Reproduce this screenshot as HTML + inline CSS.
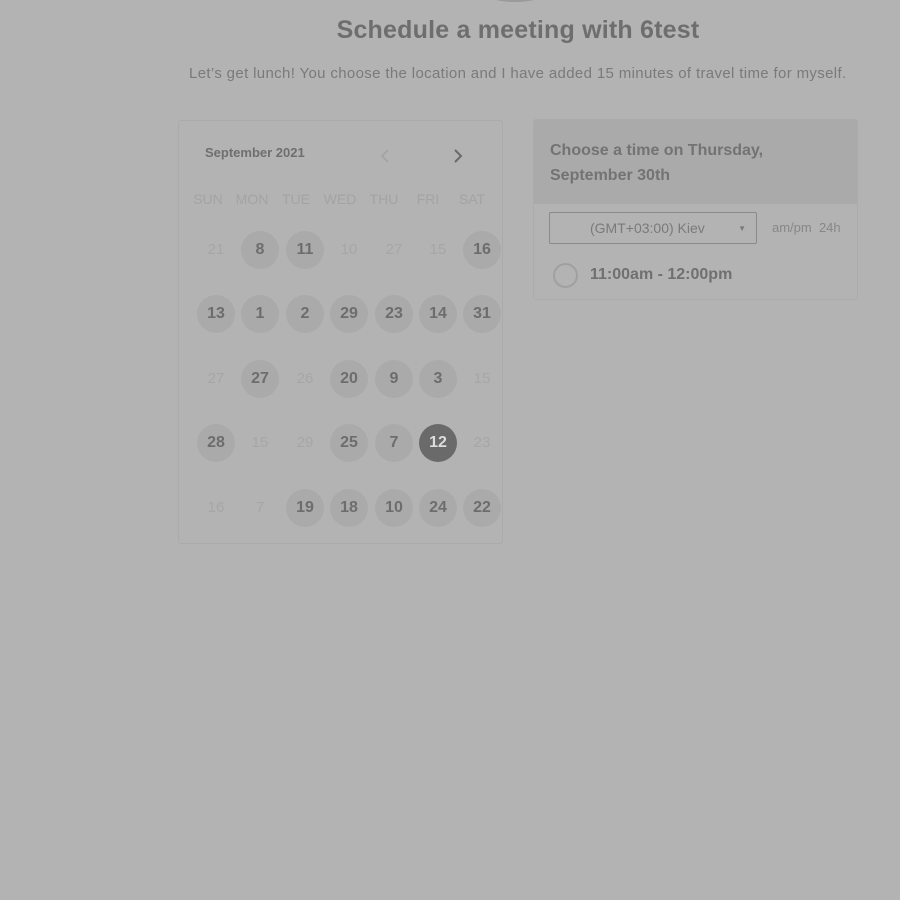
<!DOCTYPE html>
<html><head><meta charset="utf-8"><style>
*{margin:0;padding:0;box-sizing:border-box}
body{width:900px;height:900px;background:#b3b3b3;font-family:"Liberation Sans",sans-serif;position:relative;overflow:hidden}
.a{position:absolute}
h1{position:absolute;top:16px;left:0;width:1036px;text-align:center;font-size:25px;font-weight:bold;color:#6e6e6e;letter-spacing:0.2px}
.sub{top:65px;left:189px;font-size:15px;color:#7a7a7a;letter-spacing:0.35px;white-space:nowrap}
.cal{left:178px;top:120px;width:325px;height:424px;border:1px solid #ababab;border-radius:3px}
.d{position:absolute;width:38px;height:38px;margin:-18px 0 0 -19px;border-radius:50%;text-align:center;line-height:38px;font-size:16px;font-weight:bold;color:#6d6d6d}
.c{background:#aaaaaa}
.f{color:#a6a6a6;font-weight:normal;font-size:15px}
.s{background:#6a6a6a;color:#ddd}
.w{position:absolute;top:191px;font-size:14px;color:#a3a3a3;width:50px;margin-left:-25px;text-align:center}
.tp{left:533px;top:119px;width:325px;height:181px;border:1px solid #ababab;border-radius:3px;overflow:hidden}
.hd{height:84px;background:#aaaaaa;padding:18px 16px;font-size:16px;font-weight:bold;color:#737373;line-height:25px}
</style></head><body>
<div class="a" style="left:490px;top:-10px;width:50px;height:12px;border-radius:50%;background:#888;opacity:.6"></div>
<h1>Schedule a meeting with 6test</h1>
<div class="a sub">Let’s get lunch! You choose the location and I have added 15 minutes of travel time for myself.</div>
<div class="a cal"></div>
<div class="a" style="left:205px;top:145px;font-size:13px;font-weight:bold;color:#6f6f6f">September 2021</div>
<svg class="a" style="left:378px;top:148px" width="14" height="16"><path d="M10 2 L4 8 L10 14" fill="none" stroke="#a3a3a3" stroke-width="1.6"/></svg>
<svg class="a" style="left:451px;top:148px" width="14" height="16"><path d="M4 2 L10 8 L4 14" fill="none" stroke="#6a6a6a" stroke-width="2"/></svg>
<div class="w" style="left:208px">SUN</div><div class="w" style="left:252px">MON</div><div class="w" style="left:296px">TUE</div><div class="w" style="left:340px">WED</div><div class="w" style="left:384px">THU</div><div class="w" style="left:428px">FRI</div><div class="w" style="left:472px">SAT</div>
<div id="g"></div>
<div class="a tp"><div class="hd">Choose a time on Thursday,<br>September 30th</div>
<div class="a" style="left:15px;top:92px;width:208px;height:32px;border:1px solid #8a8a8a;border-radius:2px;font-size:14px;color:#7a7a7a;line-height:30px;padding-left:40px">(GMT+03:00) Kiev<span style="position:absolute;right:10px;top:1px;font-size:8px">&#9660;</span></div>
<div class="a" style="left:238px;top:100px;font-size:13px;color:#878787">am/pm&nbsp;&nbsp;24h</div>
<div class="a" style="left:19px;top:143px;width:25px;height:25px;border:2px solid #a0a0a0;border-radius:50%"></div>
<div class="a" style="left:56px;top:146px;font-size:16px;font-weight:bold;color:#707070">11:00am - 12:00pm</div>
</div>
<script>
var xs=[216,260,305,349,394,438,482],ys=[249,313,378,442,507];
var rows=[["21f","8c","11c","10f","27f","15f","16c"],["13c","1c","2c","29c","23c","14c","31c"],["27f","27c","26f","20c","9c","3c","15f"],["28c","15f","29f","25c","7c","12s","23f"],["16f","7f","19c","18c","10c","24c","22c"]];
var h="";rows.forEach(function(r,i){r.forEach(function(v,j){h+='<div class="d '+v.slice(-1)+'" style="left:'+xs[j]+'px;top:'+ys[i]+'px">'+v.slice(0,-1)+'</div>';});});
document.getElementById("g").innerHTML=h;
</script>
</body></html>
